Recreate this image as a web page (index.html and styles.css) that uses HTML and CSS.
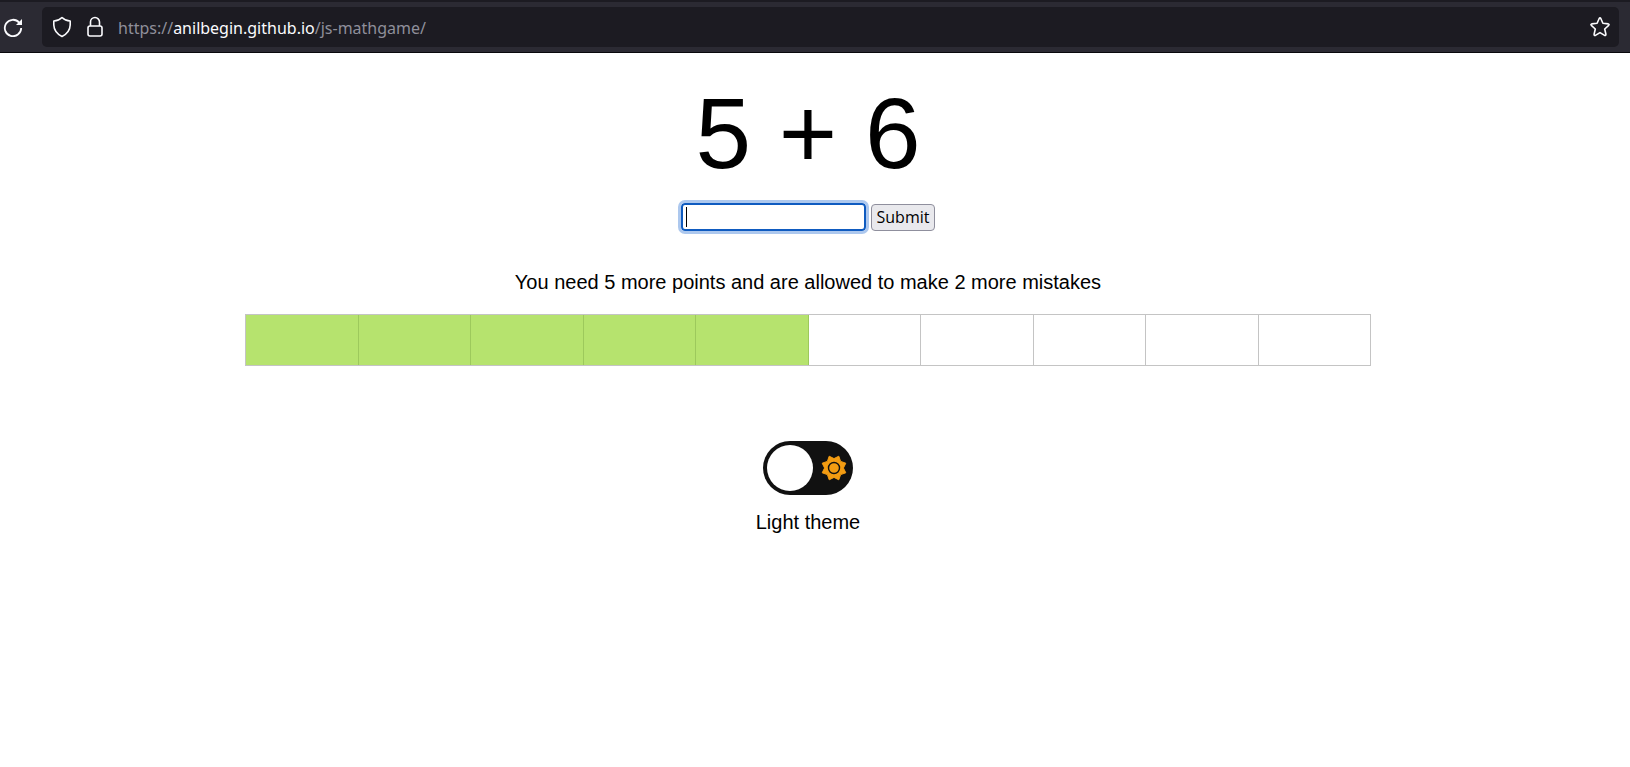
FILE: index.html
```html
<!DOCTYPE html>
<html lang="en">
<head>
<meta charset="utf-8">
<title>Math Game</title>
<link rel="stylesheet" href="styles.css">
</head>
<body>
<header class="toolbar">
  <button class="icon-button" type="button" aria-label="Reload">
    <svg width="20" height="20" viewBox="0 0 20 20" fill="none" stroke="#fbfbfe" stroke-width="1.800"><path d="M16.200 5.600A8.200 8.200 0 1 0 18.200 11"/><path d="M19 2v6h-6z" fill="#fbfbfe" stroke="none"/></svg>
  </button>
  <div class="address">
    <svg width="20" height="22" viewBox="0 0 20 22" fill="none" stroke="#fbfbfe" stroke-width="1.600" stroke-linejoin="round"><path d="M10 1.500C12 3.500 15 4.800 18.200 5V9C18 14 15 18 10 20.500 5 18 2 14 1.800 9V5C5 4.800 8 3.500 10 1.500Z"/></svg>
    <svg width="16" height="22" viewBox="0 0 16 22" fill="none" stroke="#fbfbfe" stroke-width="1.600"><rect x="1" y="10" width="14" height="10" rx="2"/><path d="M3.500 10V6a4.500 4.500 0 0 1 9 0v4"/></svg>
    <a class="url" href="#">https://<span class="host">anilbegin.github.io</span>/js-mathgame/</a>
    <svg class="star" width="20" height="20" viewBox="0 0 20 20" fill="none" stroke="#fbfbfe" stroke-width="1.600" stroke-linejoin="round"><path d="M9.200 1.500Q10 .2 10.800 1.500L12.900 6.300 18.300 6.900Q19.600 7.300 18.700 8.300L14.700 12 15.900 17.300Q15.900 18.800 14.600 18.400L10 15.600 5.400 18.400Q4.100 18.800 4.100 17.300L5.300 12 1.300 8.300Q.4 7.300 1.700 6.900L7.100 6.300Z"/></svg>
  </div>
</header>
<main class="game">
  <p class="problem">5 + 6</p>
  <form class="answer">
    <input class="answer-field" type="text" aria-label="Answer" autocomplete="off">
    <button class="submit">Submit</button>
  </form>
  <p class="status">You need 5 more points and are allowed to make 2 more mistakes</p>
  <div class="progress">
    <div class="box done"></div><div class="box done"></div><div class="box done"></div><div class="box done"></div><div class="box done"></div>
    <div class="box"></div><div class="box"></div><div class="box"></div><div class="box"></div><div class="box"></div>
  </div>
  <label class="theme">
    <span class="switch">
      <input class="knob" type="checkbox">
      <svg width="26" height="26" viewBox="-13 -13 26 26"><path fill="#f39c12" stroke="#f39c12" stroke-linejoin="round" d="M0-9.400 4.800-11.800 6.600-6.600 11.800-4.800 9.400 0 11.800 4.800 6.600 6.600 4.800 11.800 0 9.400-4.800 11.800-6.600 6.600-11.800 4.800-9.400 0-11.800-4.800-6.600-6.600-4.800-11.800Z"/><circle r="5.500" fill="none" stroke="#111" stroke-width="1.400"/></svg>
    </span>
    Light theme
  </label>
</main>
</body>
</html>
```
FILE: styles.css
```css
* { box-sizing: border-box; }
body {
  margin: 0;
  background: #fff;
  color: #000;
  font: 20px/24px "Liberation Sans", Arial, sans-serif;
}
.toolbar {
  display: flex;
  align-items: center;
  gap: 19px;
  padding: 5px 11px 5px 3px;
  background: #2b2a33;
  border-top: 2px solid #1c1b22;
  border-bottom: 1px solid #08080c;
}
.icon-button { display: flex; padding: 0; border: 0; background: none; }
.address {
  flex: 1;
  display: flex;
  align-items: center;
  height: 40px;
  padding: 0 9px 0 10px;
  border-radius: 5px;
  background: #1c1b22;
  gap: 15px;
}
.url {
  padding-top: 2px;
  font: 16px/24px "Noto Sans", sans-serif;
  color: #8f8f9a;
  text-decoration: none;
}
.host { color: #fbfbfe; }
.star { margin-left: auto; }
.game {
  display: flex;
  flex-direction: column;
  align-items: center;
  padding: 23px 259px 24px 245px;
}
.problem { margin: 0; font-size: 100px; line-height: 115px; }
.answer { display: flex; align-items: center; gap: 5px; margin-top: 12px; }
.answer-field {
  width: 185px;
  height: 28px;
  padding: 0 4px;
  border: 2px solid #0f5bc0;
  border-radius: 4px;
  outline: 3px solid #adc8ee;
  background: linear-gradient(#000, #000) 3px 50% / 1px 20px no-repeat #fff;
  font: 18px "Noto Sans", sans-serif;
}
.answer-field:focus { background: #fff; }
.submit {
  height: 27px;
  padding: 0 5px;
  border: 1px solid #8f8f9d;
  border-radius: 4px;
  background: #e9e9ed;
  color: #000;
  font: 16px/24px "Open Sans", sans-serif;
}
.status { margin: 39px 0 20px; }
.progress {
  display: flex;
  align-self: stretch;
  height: 52px;
  border: 1px solid #c4c4c4;
}
.box { flex: 1; border-right: 1px solid #c4c4c4; }
.box:last-child { border-right: 0; }
.done { background: #b6e36e; border-right-color: #9dc95c; }
.theme {
  display: flex;
  flex-direction: column;
  align-items: center;
  gap: 15px;
  margin-top: 75px;
}
.switch {
  display: flex;
  align-items: center;
  justify-content: space-between;
  width: 90px;
  height: 54px;
  padding: 0 6px 0 4px;
  border-radius: 27px;
  background: #111;
}
.knob {
  appearance: none;
  width: 46px;
  height: 46px;
  margin: 0;
  border-radius: 50%;
  background: #fff;
}
```
